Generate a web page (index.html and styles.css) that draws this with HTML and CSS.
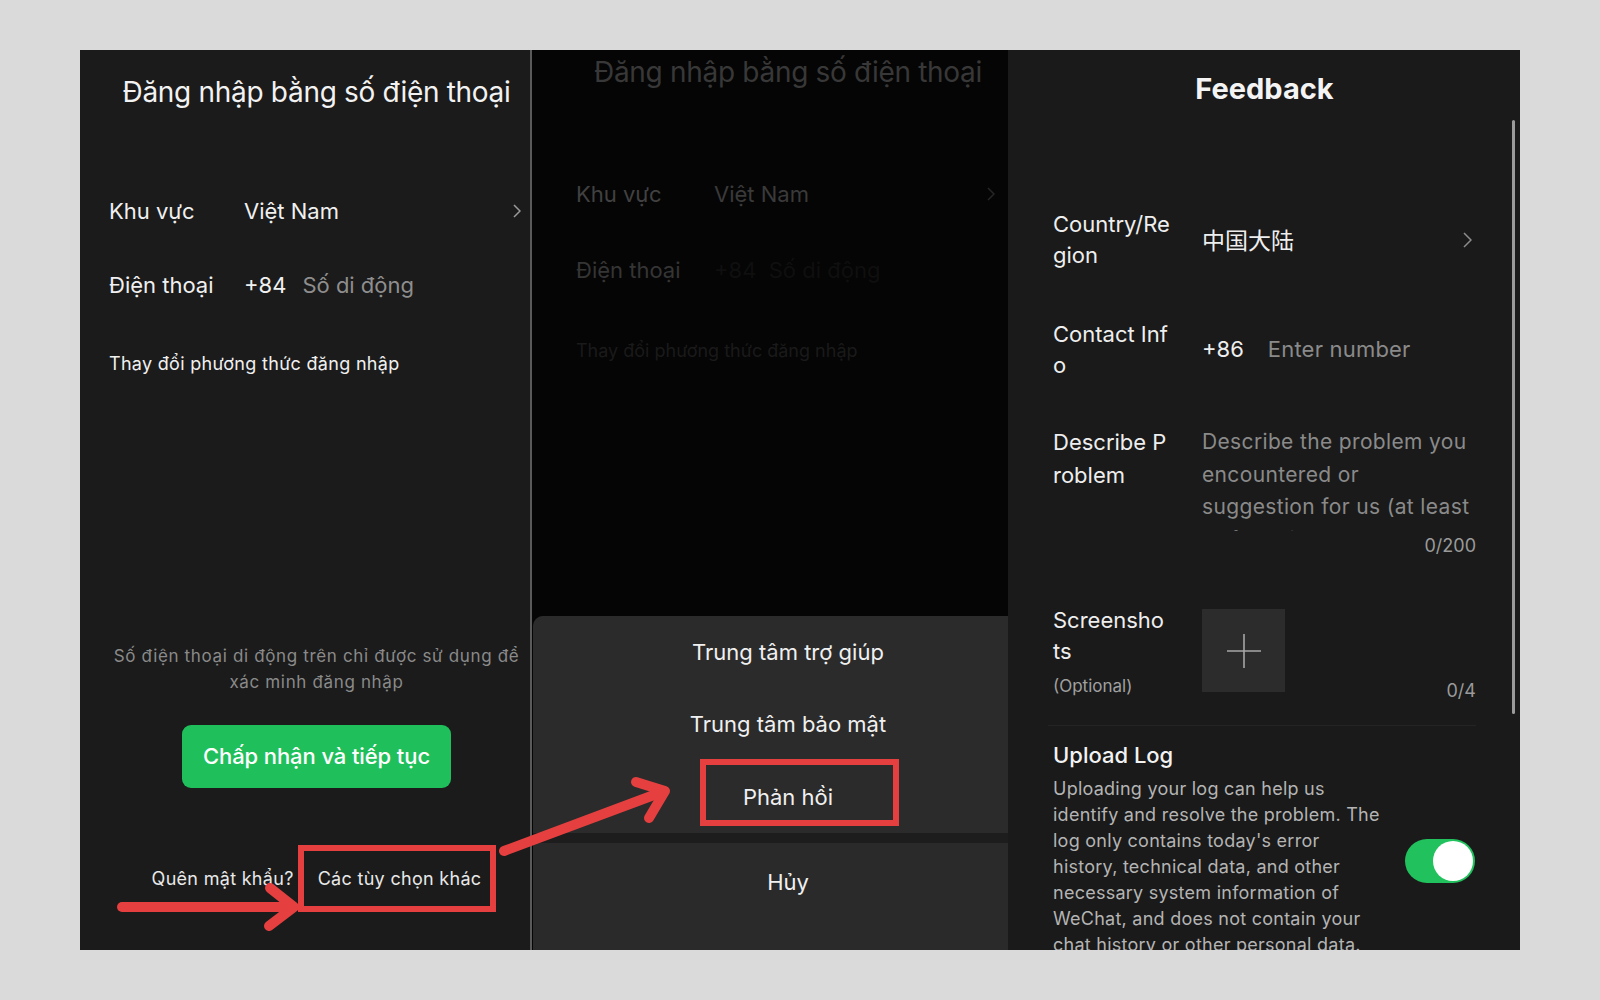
FILE: index.html
```html
<!DOCTYPE html>
<html lang="vi">
<head>
<meta charset="utf-8">
<title>Feedback</title>
<link rel="stylesheet" href="styles.css">
</head>
<body>
<div class="stage">
  <section class="screen login">
    <h1 class="login-title">Đăng nhập bằng số điện thoại</h1>
    <div class="field field-region">
      <span class="field-label">Khu vực</span>
      <span class="field-value">Việt Nam</span>
      <svg class="chev" width="8" height="14" viewBox="0 0 8 14"><polyline points="1,1 7,7 1,13" fill="none" stroke="#9a9a9a" stroke-width="1.5"/></svg>
    </div>
    <div class="field field-phone">
      <span class="field-label">Điện thoại</span>
      <span class="field-value">+84</span>
      <span class="field-ph">Số di động</span>
    </div>
    <div class="change">Thay đổi phương thức đăng nhập</div>
    <p class="note">Số điện thoại di động trên chỉ được sử dụng để<br>xác minh đăng nhập</p>
    <button class="accept">Chấp nhận và tiếp tục</button>
    <div class="links"><span>Quên mật khẩu?</span><span>Các tùy chọn khác</span></div>
  </section>

  <div class="divider"></div>

  <section class="screen dimmed">
    <div class="dim-inner">
      <div class="dim-title">Đăng nhập bằng số điện thoại</div>
      <div class="dim-field dim-region">
        <span class="dim-label">Khu vực</span>
        <span class="dim-value">Việt Nam</span>
        <svg class="chev" width="8" height="14" viewBox="0 0 8 14"><polyline points="1,1 7,7 1,13" fill="none" stroke="#262626" stroke-width="1.5"/></svg>
      </div>
      <div class="dim-field dim-phone">
        <span class="dim-label">Điện thoại</span>
        <span class="dim-faint">+84 &nbsp;Số di động</span>
      </div>
      <div class="dim-change">Thay đổi phương thức đăng nhập</div>
      <div class="sheet">
        <div class="sheet-group">
          <div class="sheet-item">Trung tâm trợ giúp</div>
          <div class="sheet-item">Trung tâm bảo mật</div>
          <div class="sheet-item">Phản hồi</div>
        </div>
        <div class="sheet-gap"></div>
        <div class="sheet-cancel">Hủy</div>
      </div>
    </div>
  </section>

  <section class="screen feedback">
    <h2 class="fb-title">Feedback</h2>
    <div class="fb-row fb-country">
      <span class="fb-label">Country/Re<br>gion</span>
      <span class="fb-cn">中国大陆</span>
      <svg class="fb-chev" width="9" height="16" viewBox="0 0 9 16"><polyline points="1,1 8,8 1,15" fill="none" stroke="#8c8c8c" stroke-width="1.5"/></svg>
    </div>
    <div class="fb-row fb-contact">
      <span class="fb-label">Contact Inf<br>o</span>
      <span class="fb-code">+86</span>
      <span class="fb-ph">Enter number</span>
    </div>
    <div class="fb-row fb-describe">
      <span class="fb-label fb-label-tall">Describe P<br>roblem</span>
      <div class="fb-textarea">Describe the problem you<br>encountered or<br>suggestion for us (at least<br>15 full-width characters)</div>
    </div>
    <div class="fb-count">0/200</div>
    <div class="fb-shots">
      <div class="fb-shots-label">Screensho<br>ts<span class="fb-optional">(Optional)</span></div>
      <div class="fb-add">
        <svg width="34" height="34" viewBox="0 0 34 34"><path d="M17 0V34M0 17H34" stroke="#a6a6a6" stroke-width="1.6" fill="none"/></svg>
      </div>
      <div class="fb-count-shots">0/4</div>
    </div>
    <div class="fb-sep"></div>
    <div class="fb-upload">
      <div class="fb-upload-text">
        <div class="fb-upload-title">Upload Log</div>
        <p class="fb-upload-desc">Uploading your log can help us<br>identify and resolve the problem. The<br>log only contains today's error<br>history, technical data, and other<br>necessary system information of<br>WeChat, and does not contain your<br>chat history or other personal data.</p>
      </div>
      <div class="toggle"><span class="toggle-knob"></span></div>
    </div>
    <div class="scrollbar"></div>
  </section>

  <svg class="annotations" width="1440" height="900" viewBox="0 0 1440 900">
    <g fill="none" stroke="#e5403f" stroke-linecap="round" stroke-linejoin="round">
      <rect x="221" y="798" width="192" height="61" stroke-width="6" stroke-linecap="butt" stroke-linejoin="miter"/>
      <rect x="623" y="712" width="193" height="61" stroke-width="6" stroke-linecap="butt" stroke-linejoin="miter"/>
      <path d="M42 857 L212 857" stroke-width="10"/>
      <path d="M190 838 L214 857 L189 876" stroke-width="10"/>
      <path d="M424 801 L582 742" stroke-width="10"/>
      <path d="M556 732 L585 741 L569 768" stroke-width="10"/>
    </g>
  </svg>
</div>
</body>
</html>
```

FILE: styles.css
```css
* {
  box-sizing: border-box;
  margin: 0;
  padding: 0;
}

html, body {
  width: 1600px;
  height: 1000px;
  overflow: hidden;
}

body {
  background: #dadada;
  font-family: Inter, "Noto Sans", "Noto Sans CJK SC", sans-serif;
  color: #f0f0f0;
}

.stage {
  position: relative;
  display: flex;
  margin: 50px 0 0 80px;
  width: 1440px;
  height: 900px;
}

.screen {
  position: relative;
  height: 900px;
  overflow: hidden;
  flex: none;
}

/* ---------- left: login ---------- */
.login {
  width: 450px;
  background: #1b1b1b;
  padding-left: 23px;
}

.login-title {
  padding-top: 24px;
  font-size: 28px;
  line-height: 36px;
  font-weight: 400;
  letter-spacing: -0.3px;
  text-align: center;
  color: #f2f2f2;
}

.field {
  display: flex;
  align-items: center;
  height: 30px;
  padding: 0 9px 0 7px;
  margin-left: -1px;
  font-size: 22px;
  line-height: 30px;
}

.field-label {
  width: 135px;
  flex: none;
}

.field-ph {
  margin-left: 16px;
  color: #8e8e8e;
}

.chev {
  margin-left: auto;
  flex: none;
}

.field-region { margin-top: 86px; }
.field-phone { margin-top: 44px; }

.change {
  margin-top: 51.5px;
  padding-left: 6px;
  font-size: 18px;
  line-height: 24px;
  letter-spacing: 0.3px;
}

.note {
  margin-top: 267.5px;
  font-size: 17px;
  line-height: 26px;
  letter-spacing: 0.65px;
  color: #8a8a8a;
  text-align: center;
}

.accept {
  display: block;
  margin: 30px auto 0;
  width: 269px;
  height: 63px;
  border: 0;
  border-radius: 9px;
  background: #1fbf5b;
  color: #ffffff;
  font-family: Inter, "Noto Sans", sans-serif;
  font-size: 22px;
  font-weight: 500;
  line-height: 63px;
  letter-spacing: -0.1px;
}

.links {
  margin-top: 78.5px;
  display: flex;
  justify-content: center;
  gap: 24px;
  font-size: 18px;
  line-height: 24px;
  letter-spacing: 0.3px;
  color: #e8e8e8;
}

.divider {
  width: 2px;
  height: 900px;
  background: #5a5a5a;
  flex: none;
}

/* ---------- middle: dimmed screen + action sheet ---------- */
.dimmed {
  width: 476px;
  background: #050505;
}

.dim-inner {
  width: 510px;
  height: 900px;
  margin-left: 1px;
  display: flex;
  flex-direction: column;
}

.dim-title {
  padding-top: 4px;
  font-size: 28px;
  line-height: 36px;
  letter-spacing: -0.3px;
  text-align: center;
  color: #383838;
}

.dim-field {
  display: flex;
  align-items: center;
  height: 30px;
  padding: 0 48px 0 43px;
  font-size: 22px;
  line-height: 30px;
}

.dim-label {
  width: 138px;
  flex: none;
}

.dim-region {
  margin-top: 89px;
  color: #414141;
}

.dim-value {
  color: #3a3a3a;
}

.dim-phone {
  margin-top: 46px;
  color: #353535;
}

.dim-faint {
  color: #0f0f0f;
}

.dim-change {
  margin-top: 53.5px;
  padding-left: 43px;
  font-size: 18px;
  line-height: 24px;
  color: #1a1a1a;
}

.sheet {
  margin-top: auto;
  height: 334px;
  background: #1d1d1d;
  border-radius: 10px 10px 0 0;
  overflow: hidden;
}

.sheet-group {
  background: #2b2b2b;
}

.sheet-item {
  height: 72.33px;
  line-height: 72.33px;
  text-align: center;
  font-size: 22px;
  color: #f0f0f0;
}

.sheet-gap {
  height: 10px;
}

.sheet-cancel {
  height: 107px;
  padding-top: 24px;
  background: #2a2a2a;
  text-align: center;
  font-size: 22px;
  line-height: 30px;
  color: #f0f0f0;
}

/* ---------- right: feedback ---------- */
.feedback {
  width: 512px;
  background: #1a1a1a;
  padding: 0 44px 0 45px;
  color: #eeeeee;
}

.fb-title {
  padding-top: 20.5px;
  font-size: 29px;
  line-height: 36px;
  font-weight: 700;
  text-align: center;
  color: #f4f4f4;
}

.fb-row {
  display: flex;
  align-items: center;
  font-size: 22px;
  line-height: 31px;
}

.fb-label {
  width: 149px;
  flex: none;
}

.fb-country { margin-top: 102px; }
.fb-contact { margin-top: 48px; }

.fb-cn {
  font-family: "Noto Sans CJK SC", sans-serif;
  font-size: 23px;
}

.fb-chev {
  margin-left: auto;
  margin-right: 4px;
  flex: none;
}

.fb-ph {
  margin-left: 24px;
  color: #8a8a8a;
  letter-spacing: 0.2px;
}

.fb-describe {
  margin-top: 45.5px;
  align-items: flex-start;
  line-height: 32.5px;
}

.fb-textarea {
  height: 105px;
  overflow: hidden;
  font-size: 21px;
  line-height: 32.5px;
  letter-spacing: 0.35px;
  color: #8a8a8a;
}

.fb-count {
  margin-top: 2.5px;
  text-align: right;
  font-size: 18px;
  line-height: 24px;
  color: #9a9a9a;
}

.fb-shots {
  margin-top: 47px;
  display: flex;
  align-items: flex-start;
}

.fb-shots-label {
  width: 149px;
  flex: none;
  font-size: 22px;
  line-height: 31px;
}

.fb-optional {
  display: block;
  margin-top: 7.5px;
  font-size: 17px;
  line-height: 24px;
  color: #a0a0a0;
}

.fb-add {
  width: 83px;
  height: 83px;
  margin-top: 4.5px;
  background: #2c2c2c;
  display: flex;
  align-items: center;
  justify-content: center;
}

.fb-count-shots {
  margin-left: auto;
  padding-top: 74px;
  font-size: 18px;
  line-height: 24px;
  color: #9a9a9a;
}

.fb-sep {
  margin: 22px 0 0 -5px;
  height: 1px;
  background: #242424;
}

.fb-upload {
  margin-top: 14.5px;
  display: flex;
  align-items: flex-start;
}

.fb-upload-title {
  font-size: 22px;
  line-height: 31px;
  font-weight: 500;
  color: #f2f2f2;
}

.fb-upload-desc {
  margin-top: 5px;
  font-size: 18px;
  line-height: 26px;
  letter-spacing: 0.25px;
  color: #b4b4b4;
}

.toggle {
  position: relative;
  flex: none;
  width: 70px;
  height: 44px;
  margin: 98.5px 1px 0 auto;
  border-radius: 22px;
  background: #21c25d;
}

.toggle-knob {
  position: absolute;
  top: 2px;
  right: 2px;
  width: 40px;
  height: 40px;
  border-radius: 50%;
  background: #ffffff;
}

.scrollbar {
  position: absolute;
  left: 504px;
  top: 70px;
  width: 3px;
  height: 594px;
  border-radius: 2px;
  background: #9a9a9a;
}

/* ---------- annotation overlay ---------- */
.annotations {
  position: absolute;
  left: 0;
  top: 0;
  pointer-events: none;
}
```
